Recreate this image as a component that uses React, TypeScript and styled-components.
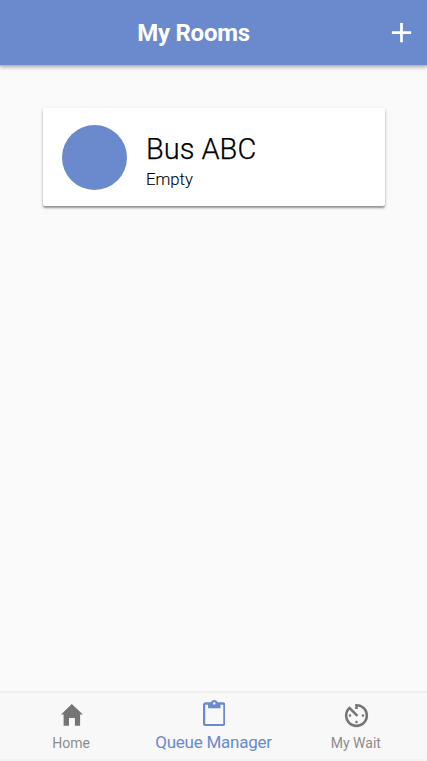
import React from "react";
import styled, { createGlobalStyle } from "styled-components";
import { MdAdd, MdAvTimer } from "react-icons/md";

const GlobalStyle = createGlobalStyle`
  * { box-sizing: border-box; }
  body { margin: 0; background: #fafafa; font-family: Roboto, "Liberation Sans", sans-serif; }
`;
const Screen = styled.div`
  height: 100vh;
  display: flex;
  flex-direction: column;
  overflow: hidden;
`;
const Header = styled.header`
  height: 66px;
  flex: none;
  display: grid;
  grid-template-columns: 1fr 42px;
  align-items: center;
  background: #6a8acd;
  color: #fff;
  border-bottom: 1px solid #a5b8e0;
  box-shadow: 0 1px 4px rgba(0, 0, 0, 0.34);
`;
const Title = styled.h1`
  margin: 0;
  padding-left: 2px;
  text-align: center;
  font-size: 24px;
  line-height: 32px;
  font-weight: 700;
  letter-spacing: -0.25px;
`;
const AddButton = styled.button`
  border: 0;
  padding: 0;
  background: none;
  color: inherit;
  display: flex;
  font-size: 33px;
`;
const Content = styled.main`
  flex: 1;
  padding: 42px 42px 0 43px;
`;
const Card = styled.article`
  height: 98px;
  display: flex;
  align-items: center;
  gap: 19px;
  padding-left: 19px;
  background: #fff;
  border-radius: 2px;
  box-shadow: 0 2px 2px rgba(0, 0, 0, 0.36), 0 1px 4px rgba(0, 0, 0, 0.12);
`;
const Avatar = styled.div`
  width: 65px;
  height: 65px;
  border-radius: 50%;
  background: #6a8acd;
`;
const Details = styled.div`
  padding-top: 11px;
`;
const RoomName = styled.div`
  font-size: 29px;
  line-height: 34px;
  font-weight: 300;
  color: #000;
  -webkit-text-stroke: 0.25px #000;
`;
const RoomStatus = styled.div`
  font-size: 16.7px;
  line-height: 27px;
  font-weight: 300;
  color: #000;
  -webkit-text-stroke: 0.1px #000;
`;
const TabBar = styled.nav`
  height: 70px;
  flex: none;
  display: grid;
  grid-template-columns: repeat(3, 1fr);
  border-top: 2px solid #efefef;
  border-bottom: 2px solid #f2f2f2;
  background: #f8f8f8;
`;
const Tab = styled.button<{ $active?: boolean }>`
  border: 0;
  padding: ${p => (p.$active ? 5 : 7)}px 0 0 1px;
  background: none;
  font-family: inherit;
  display: flex;
  flex-direction: column;
  align-items: center;
  color: ${p => (p.$active ? "#6a8acd" : "#757575")};
  font-size: ${p => (p.$active ? 17 : 14)}px;
`;
const IconSlot = styled.span<{ $size: number }>`
  height: 30px;
  display: flex;
  align-items: center;
  font-size: ${p => p.$size}px;
`;
const TabLabel = styled.span<{ $active?: boolean }>`
  line-height: 20px;
  margin-top: ${p => (p.$active ? 4 : 3)}px;
  margin-left: -1px;
  letter-spacing: ${p => (p.$active ? "-0.24px" : "0")};
  color: ${p => (p.$active ? "#6a8acd" : "#8c8c8c")};
`;

const HomeIcon = () => (
  <svg width="22" height="22" viewBox="0 0 22 22" fill="currentColor" aria-hidden="true">
    <path d="M10.8 0 21.9 10.6H19.1V21.7H13.9V14H8V21.7H2.6V10.6H0Z" />
  </svg>
);

const ClipboardIcon = () => (
  <svg width="22.5" height="26" viewBox="3 0 18 22" preserveAspectRatio="none" fill="currentColor" aria-hidden="true">
    <path d="M19 2h-4.18C14.4.84 13.3 0 12 0S9.6.84 9.18 2H5c-1.1 0-2 .9-2 2v16c0 1.1.9 2 2 2h14c1.1 0 2-.9 2-2V4c0-1.1-.9-2-2-2zm-7 0c.55 0 1 .45 1 1s-.45 1-1 1-1-.45-1-1 .45-1 1-1zm7.2 18.3H4.8V4H7v3h10V4h2.2v16.3z" />
  </svg>
);

export default function App() {
  return (
    <Screen>
      <GlobalStyle />
      <Header>
        <Title>My Rooms</Title>
        <AddButton aria-label="Add room"><MdAdd /></AddButton>
      </Header>
      <Content>
        <Card>
          <Avatar />
          <Details>
            <RoomName>Bus ABC</RoomName>
            <RoomStatus>Empty</RoomStatus>
          </Details>
        </Card>
      </Content>
      <TabBar>
        <Tab>
          <IconSlot $size={22}><HomeIcon /></IconSlot>
          <TabLabel>Home</TabLabel>
        </Tab>
        <Tab $active>
          <IconSlot $size={26}><ClipboardIcon /></IconSlot>
          <TabLabel $active>Queue Manager</TabLabel>
        </Tab>
        <Tab>
          <IconSlot $size={31}><MdAvTimer /></IconSlot>
          <TabLabel>My Wait</TabLabel>
        </Tab>
      </TabBar>
    </Screen>
  );
}
